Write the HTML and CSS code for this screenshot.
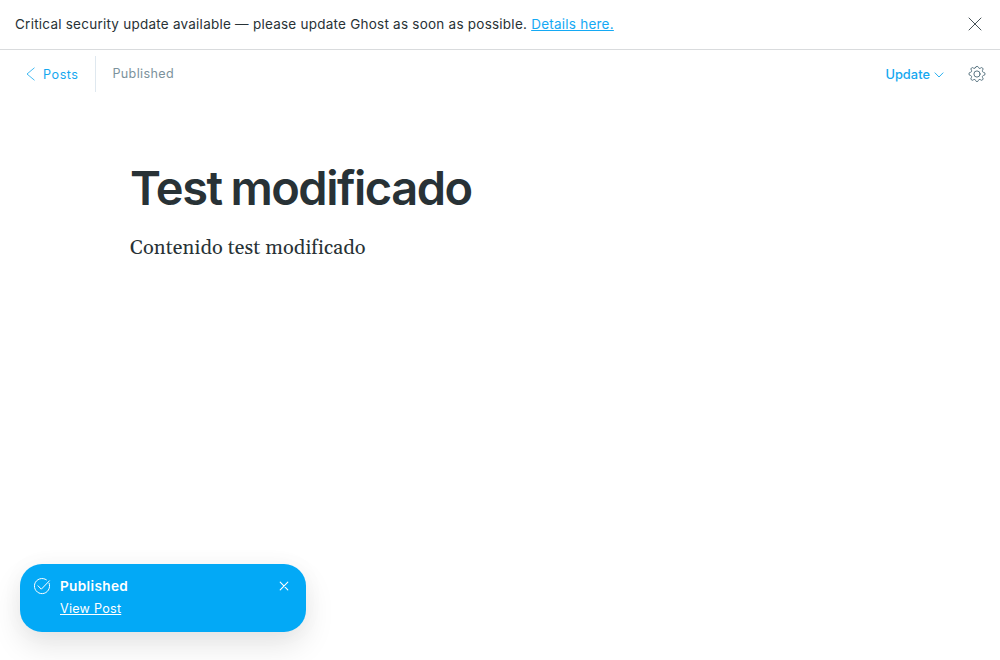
FILE: index.html
```html
<!DOCTYPE html>
<html lang="en">
<head>
<meta charset="utf-8">
<title>Test modificado</title>
<link rel="stylesheet" href="styles.css">
</head>
<body>
<div class="app">
  <aside class="alert">
    <p class="alert-text">Critical security update available — please update Ghost as soon as possible. <a class="alert-link" href="#">Details here.</a></p>
    <button class="icon-button alert-close" aria-label="Close">
      <svg width="14" height="14" viewBox="0 0 14 14"><path d="M1 1l12 12M13 1L1 13"/></svg>
    </button>
  </aside>
  <header class="toolbar">
    <a class="back" href="#">
      <svg class="back-icon" width="9" height="14" viewBox="0 0 9 14"><path d="M8.2 1L1 7l7.2 6"/></svg>
      <span class="back-label">Posts</span>
    </a>
    <span class="status">Published</span>
    <button class="update"><span class="update-label">Update</span>
      <svg class="update-icon" width="10" height="6" viewBox="0 0 10 6"><path d="M1 .9L5 5 9 .9"/></svg>
    </button>
    <button class="icon-button settings" aria-label="Settings">
      <svg width="18" height="18" viewBox="-.3 -.3 18.6 18.6"><circle cx="9" cy="9" r="3.2"/><path d="M7.6 2.1a1.46 1.46 0 0 1 2.8 0 1.46 1.46 0 0 0 2.1.9 1.46 1.46 0 0 1 2.4 1.9 1.46 1.46 0 0 0 .8 2.4 1.6 1.6 0 0 1 0 3.2 1.46 1.46 0 0 0-.8 2.4 1.46 1.46 0 0 1-2.3 2 1.46 1.46 0 0 0-2.2.9 1.46 1.46 0 0 1-2.8 0 1.46 1.46 0 0 0-2.2-.9 1.46 1.46 0 0 1-2.3-2 1.46 1.46 0 0 0-.8-2.4 1.6 1.6 0 0 1 0-3.2 1.46 1.46 0 0 0 .8-2.4A1.46 1.46 0 0 1 5.5 3a1.46 1.46 0 0 0 2.1-.9z"/></svg>
    </button>
  </header>
  <main class="editor">
    <h1 class="title">Test modificado</h1>
    <p class="content">Contenido test modificado</p>
  </main>
  <div class="toast">
    <svg class="toast-icon" width="18" height="18" viewBox="0 0 18 18"><path d="M16.1 6.2A7.6 7.6 0 1 1 13.4 2.8M5 8.8l3.3 3.4 8.1-8.4"/></svg>
    <div class="toast-body">
      <strong class="toast-title">Published</strong>
      <a class="toast-link" href="#">View Post</a>
    </div>
    <button class="icon-button toast-close" aria-label="Dismiss">
      <svg width="10" height="10" viewBox="0 0 10 10"><path d="M1.2 1.2l7.6 7.6M8.8 1.2L1.2 8.8"/></svg>
    </button>
  </div>
</div>
</body>
</html>
```
FILE: styles.css
```css
* { box-sizing: border-box; }
body {
  margin: 0;
  background: #fff;
  color: #283236;
  font-family: Inter, "Liberation Sans", sans-serif;
}
.app { position: relative; height: 660px; overflow: hidden; }
svg { display: block; fill: none; stroke: currentColor; stroke-linecap: round; stroke-linejoin: round; }
button { margin: 0; padding: 0; border: 0; background: none; color: inherit; font: inherit; letter-spacing: inherit; }
.alert {
  display: flex;
  align-items: center;
  justify-content: space-between;
  height: 50px;
  padding: 0 18px 2px 15px;
  border-bottom: 1px solid #d9dbdd;
}
.alert-text { margin: 0; font-size: 13.5px; line-height: 20px; letter-spacing: .238px; white-space: nowrap; }
.alert-link { color: #14a9f4; text-decoration: underline; }
.alert-close { color: #465157; }
.toolbar { display: flex; align-items: center; height: 48px; padding: 0 14px 0 26px; }
.back { display: flex; align-items: center; gap: 8px; width: 70px; height: 36px; border-right: 1px solid #dfe8ef; color: #15a8ef; text-decoration: none; }
.back-icon { stroke-width: .8; }
.back-label { font-size: 12.6px; letter-spacing: .55px; padding-top: 1px; }
.status { margin: -1px 0 0 16.4px; color: #7c929c; font-size: 12.6px; letter-spacing: .36px; }
.update { display: flex; align-items: center; gap: 4px; margin-left: auto; color: #15a8ef; font-size: 12.8px; font-weight: 500; letter-spacing: .05px; }
.update-label { padding-top: 1px; }
.update-icon { stroke-width: .9; margin-top: 1px; }
.settings { margin-left: 24px; color: #54707d; }
.settings svg { stroke-width: 1; }
.editor { padding: 59px 130px 0; }
.title { margin: 0; font-size: 47px; line-height: 62px; font-weight: 600; letter-spacing: -1.5px; word-spacing: -1.5px; white-space: nowrap; }
.content { margin: 13px 0 0; font-family: Georgia, Gelasio, "Liberation Serif", serif; font-size: 20px; line-height: 32px; letter-spacing: .1px; }
.toast {
  position: absolute;
  left: 20px;
  bottom: 28px;
  display: flex;
  align-items: flex-start;
  width: 286px;
  height: 68px;
  padding: 13px 17px 0 13px;
  border-radius: 22px;
  background: #03a9f6;
  color: #fff;
  box-shadow: 0 14px 30px rgba(0,0,0,.1), 0 0 24px rgba(0,0,0,.03);
}
.toast-icon { stroke-width: 1; }
.toast-body { display: flex; flex-direction: column; align-items: flex-start; margin: -1px auto 0 9px; }
.toast-title { font-size: 13.6px; line-height: 20px; font-weight: 600; letter-spacing: .35px; }
.toast-link { margin-top: 3px; color: #fff; font-size: 12.6px; line-height: 20px; letter-spacing: .25px; }
.toast-close { margin-top: 4px; }
.toast-close svg { stroke-width: 1.1; }
```
